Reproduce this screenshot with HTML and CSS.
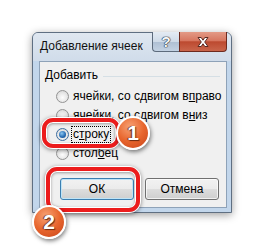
FILE: index.html
```
<!DOCTYPE html>
<html lang="ru">
<head>
    <meta charset="UTF-8">
    <meta name="viewport" content="width=device-width, initial-scale=1.0">
    <title>Добавление ячеек</title>
    <link rel="stylesheet" href="styles.css">
</head>
<body>
    <div class="stage">
        <div class="dialog">
            <div class="dialog__titlebar">
                <span class="dialog__title">Добавление ячеек</span>
                <div class="dialog__caption">
                    <button class="caption-btn caption-btn--help">?</button>
                    <button class="caption-btn caption-btn--close">
                        <svg width="16" height="12" viewBox="0 0 16 12">
                            <path d="M3 1.5h3.2L8 4.2l1.8-2.7H13L9.7 6 13 10.5H9.8L8 7.8l-1.8 2.7H3L6.3 6z" fill="#fff" stroke="#5a2a22" stroke-width="1" stroke-linejoin="round"/>
                        </svg>
                    </button>
                </div>
            </div>
            <div class="dialog__frame">
                <div class="dialog__client">
                    <div class="group">
                        <div class="group__header">
                            <span class="group__label">Добавить</span>
                            <span class="group__line"></span>
                        </div>
                        <label class="radio">
                            <span class="radio__box"></span>
                            <span class="radio__text">ячейки, со сдвигом в<u>п</u>раво</span>
                        </label>
                        <label class="radio">
                            <span class="radio__box"></span>
                            <span class="radio__text">ячейки, со сдвигом в<u>н</u>из</span>
                        </label>
                        <label class="radio">
                            <span class="radio__box radio__box--checked"></span>
                            <span class="radio__text radio__text--focus">с<u>т</u>року</span>
                        </label>
                        <label class="radio">
                            <span class="radio__box"></span>
                            <span class="radio__text">стол<u>б</u>ец</span>
                        </label>
                    </div>
                    <div class="dialog__actions">
                        <button class="btn btn--default">ОК</button>
                        <button class="btn">Отмена</button>
                    </div>
                </div>
            </div>
        </div>

        <div class="mark mark--1"></div>
        <div class="badge badge--1">1</div>
        <div class="mark mark--2"></div>
        <div class="badge badge--2">2</div>
    </div>
</body>
</html>
```

FILE: styles.css
```
html, body {
    margin: 0;
    background: #fff;
}
body {
    font-family: "Liberation Sans", Arial, sans-serif;
    font-size: 12px;
    color: #000;
}
.stage {
    position: relative;
    width: 265px;
    height: 248px;
    padding: 32px 0 0 32px;
    box-sizing: border-box;
}

/* window */
.dialog {
    width: 200px;
    box-sizing: border-box;
    border: 1px solid #5f6f82;
    border-radius: 6px 6px 0 0;
    background: #c2d6eb;
    box-shadow: 0 2px 9px rgba(0,0,0,.38);
}
.dialog__titlebar {
    display: flex;
    justify-content: space-between;
    height: 28px;
    border-radius: 5px 5px 0 0;
    background: linear-gradient(#dfe7f0, #d0dcea);
}
.dialog__title {
    padding: 6px 0 0 7px;
    line-height: 15px;
    white-space: nowrap;
    color: #111;
}
.dialog__caption {
    display: flex;
    margin: -1px 4px 0 0;
    height: 20px;
}
.caption-btn {
    height: 20px;
    padding: 0;
    border: 1px solid #5d6b7c;
    border-top: none;
    display: flex;
    align-items: center;
    justify-content: center;
}
.caption-btn--help {
    width: 27px;
    border-right: none;
    border-radius: 0 0 0 4px;
    background: linear-gradient(#e4ebf3 0%, #cfdbe8 50%, #aebfd3 51%, #c3d2e3 100%);
    font-family: "Liberation Sans", sans-serif;
    font-weight: bold;
    font-size: 15px;
    color: #f4f6f8;
    text-shadow: 0 0 1px #2f3a47, 0 0 1px #2f3a47, 0 0 1px #2f3a47, 0 0 1px #2f3a47;
}
.caption-btn--close {
    width: 48px;
    border-color: #6e2a1e;
    border-radius: 0 0 4px 0;
    background: linear-gradient(#e39a86 0%, #d77760 45%, #bd4a30 52%, #c9654b 100%);
}
.dialog__frame {
    padding: 0 4px 4px 6px;
}
.dialog__client {
    border: 1px solid #8ea2b8;
    background: #f0f0f0;
    padding: 6px 0 7px 0;
}

/* group */
.group__header {
    display: flex;
    align-items: center;
    height: 15px;
    padding-left: 5px;
    margin-bottom: 4px;
}
.group__label {
    line-height: 15px;
}
.group__line {
    flex: 1;
    height: 1px;
    margin: 1px 6px 0 5px;
    background: #d5dfe5;
}
.radio {
    display: flex;
    align-items: center;
    height: 19px;
    padding-left: 16px;
}
.radio__box {
    flex: none;
    width: 11px;
    height: 11px;
    border: 1px solid #939393;
    border-radius: 50%;
    background: radial-gradient(circle at 50% 60%, #fdfdfd 0%, #e6e6e6 55%, #cdcdcd 100%);
    margin-right: 4px;
    position: relative;
}
.radio__box--checked {
    border-color: #3c6ea0;
}
.radio__box--checked::after {
    content: "";
    position: absolute;
    left: 2px;
    top: 2px;
    width: 7px;
    height: 7px;
    border-radius: 50%;
    background: radial-gradient(circle at 40% 35%, #8cc6f0 0%, #2a6fb5 55%, #0f3e7a 100%);
}
.radio__text {
    line-height: 15px;
    white-space: nowrap;
}
.radio__text u {
    text-underline-offset: 1px;
}
.radio__text--focus {
    outline: 1px dotted #000;
    padding: 0 1px;
    margin-left: -1px;
}

/* buttons */
.dialog__actions {
    display: flex;
    gap: 11px;
    margin: 15px 0 0 20px;
}
.btn {
    width: 74px;
    height: 22px;
    padding: 0;
    border: 1px solid #707070;
    border-radius: 3px;
    background: linear-gradient(#f2f2f2 0%, #ebebeb 50%, #dddddd 51%, #cfcfcf 100%);
    box-shadow: inset 0 0 0 1px rgba(255,255,255,.7);
    font-family: inherit;
    font-size: 12px;
    color: #000;
}
.btn--default {
    border-color: #3c7fb1;
    box-shadow: inset 0 0 0 1px #bfe4f7;
}

/* callouts */
.mark {
    position: absolute;
    border: 4px solid #ec1c1c;
    border-radius: 11px;
    box-shadow: 0 0 0 1px #fff, 0 1px 4px 1px rgba(0,0,0,.45), inset 0 0 0 1px #fff, inset 0 1px 3px 1px rgba(0,0,0,.35);
}
.mark--1 {
    left: 42px;
    top: 118px;
    width: 70px;
    height: 22px;
}
.mark--2 {
    left: 46px;
    top: 167px;
    width: 86px;
    height: 37px;
}
.badge {
    position: absolute;
    width: 30px;
    height: 30px;
    border: 2px solid #fff;
    border-radius: 50%;
    background: radial-gradient(circle at 40% 30%, #f7a274 0%, #e8662e 50%, #c7441a 100%);
    box-shadow: 1px 2px 4px rgba(0,0,0,.5);
    display: flex;
    align-items: center;
    justify-content: center;
    font-family: "Liberation Sans", sans-serif;
    font-weight: bold;
    font-size: 21px;
    color: #fff;
    text-shadow: 1px 1px 1px #6a2a10, -1px 0 1px #6a2a10;
}
.badge--1 {
    left: 116px;
    top: 116px;
}
.badge--2 {
    left: 32px;
    top: 205px;
}
```
